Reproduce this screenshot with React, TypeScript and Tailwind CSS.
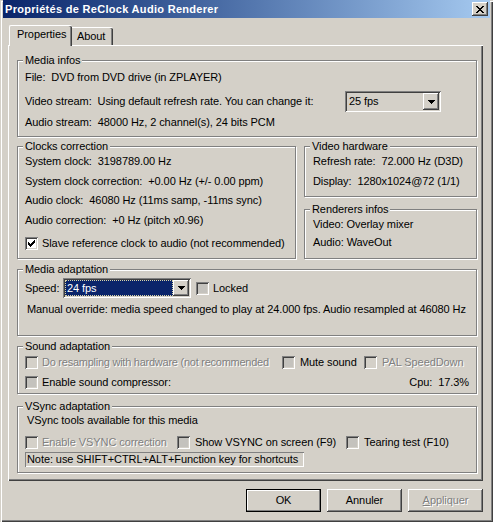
import type { ReactNode } from 'react';

const RAISED =
  'shadow-[inset_-1px_-1px_0_#404040,inset_1px_1px_0_#ffffff,inset_-2px_-2px_0_#808080,inset_2px_2px_0_#d4d0c8]';
const SUNKEN =
  'shadow-[inset_1px_1px_0_#808080,inset_-1px_-1px_0_#ffffff,inset_2px_2px_0_#404040,inset_-2px_-2px_0_#d4d0c8]';
const DISABLED = 'text-[#808080] [text-shadow:1px_1px_0_#ffffff]';

function Group({
  title,
  className,
  children,
}: {
  title: string;
  className: string;
  children: ReactNode;
}) {
  return (
    <div
      className={`relative border border-[#808080] shadow-[1px_1px_0_#ffffff,inset_1px_1px_0_#ffffff] ${className}`}
    >
      <span className="absolute -top-[7px] left-[5px] bg-[#d4d0c8] px-[2px] leading-[13px]">
        {title}
      </span>
      {children}
    </div>
  );
}

function Check({ checked, fill }: { checked?: boolean; fill: 'white' | 'gray' | 'off' }) {
  const bg = fill === 'white' ? 'bg-white' : fill === 'gray' ? 'bg-[#c4c2bd]' : 'bg-[#d4d0c8]';
  return (
    <span className={`relative block h-[13px] w-[13px] shrink-0 ${bg} ${SUNKEN}`}>
      {checked && (
        <svg className="absolute inset-0" width="13" height="13" viewBox="0 0 13 13" shapeRendering="crispEdges">
          <path
            d="M9 3h1v1h-1z M8 4h2v1h-2z M3 5h1v1h-1z M7 5h3v1h-3z M3 6h2v1h-2z M6 6h3v1h-3z M3 7h5v1h-5z M4 8h3v1h-3z M5 9h1v1h-1z"
            fill="#000"
          />
        </svg>
      )}
    </span>
  );
}

function CheckRow({
  label,
  checked,
  fill,
  disabled,
  gap,
  className = '',
  labelClass = '',
}: {
  label: string;
  checked?: boolean;
  fill: 'white' | 'gray' | 'off';
  disabled?: boolean;
  gap: string;
  className?: string;
  labelClass?: string;
}) {
  return (
    <div className={`flex h-[13px] shrink-0 items-center ${gap} ${className}`}>
      <Check checked={checked} fill={fill} />
      <span className={`whitespace-nowrap ${disabled ? DISABLED : ''} ${labelClass}`}>{label}</span>
    </div>
  );
}

function Arrow() {
  return (
    <svg width="7" height="4" viewBox="0 0 7 4" shapeRendering="crispEdges">
      <path d="M0 0h7v1h-1v1h-1v1h-1v1h-1v-1h-1v-1h-1v-1h-1z" fill="#000" />
    </svg>
  );
}

function Combo({ value, width, height, selected }: { value: string; width: string; height: string; selected?: boolean }) {
  return (
    <div className={`relative flex shrink-0 items-center bg-[#d4d0c8] p-[2px] ${width} ${height} ${SUNKEN}`}>
      {selected ? (
        <span className="flex h-full flex-1 items-center border border-dotted border-[#d8d4a8] bg-[#0a246a] pl-[1px] text-white">
          {value}
        </span>
      ) : (
        <span className="flex-1 pl-[2px]">{value}</span>
      )}
      <span className={`flex h-full w-[16px] shrink-0 items-center justify-center bg-[#d4d0c8] ${RAISED}`}>
        <Arrow />
      </span>
    </div>
  );
}

function Button({ children, kind }: { children: ReactNode; kind?: 'default' | 'disabled' }) {
  if (kind === 'default') {
    return (
      <div className="flex h-[23px] w-[75px] items-center justify-center border border-black shadow-[inset_-1px_-1px_0_#808080,inset_1px_1px_0_#ffffff]">
        {children}
      </div>
    );
  }
  return (
    <div className={`flex h-[23px] w-[75px] items-center justify-center ${RAISED} ${kind === 'disabled' ? DISABLED : ''}`}>
      {children}
    </div>
  );
}

export default function App() {
  return (
    <div className="relative h-[522px] w-[493px] overflow-hidden bg-[#d4d0c8] px-[3px] font-['Liberation_Sans',Arial,sans-serif] text-[11px] leading-[13px] tracking-[-0.08px] text-black shadow-[inset_1px_1px_0_#d4d0c8,inset_2px_2px_0_#ffffff,inset_-1px_-1px_0_#404040,inset_-2px_-2px_0_#808080]">
      {/* title bar */}
      <div className="flex h-[18px] items-center justify-between bg-gradient-to-r from-[#0a246a] to-[#a6caf0] pl-[2px] pr-[2px]">
        <span className="font-bold tracking-[0.3px] text-white">Propriétés de ReClock Audio Renderer</span>
        <span className={`flex h-[14px] w-[16px] items-center justify-center bg-[#d4d0c8] ${RAISED}`}>
          <svg width="8" height="7" viewBox="0 0 8 7" shapeRendering="crispEdges">
            <path
              d="M0 0h2v1h-2z M6 0h2v1h-2z M1 1h2v1h-2z M5 1h2v1h-2z M2 2h4v1h-4z M3 3h2v1h-2z M2 4h4v1h-4z M1 5h2v1h-2z M5 5h2v1h-2z M0 6h2v1h-2z M6 6h2v1h-2z"
              fill="#000"
            />
          </svg>
        </span>
      </div>

      <div className="ml-[5px] mt-[7px] w-[475px]">
        {/* tabs */}
        <div className="flex h-[20px] items-end pl-[1px]">
          <div className="relative z-10 -mb-px h-[21px] w-[63px] rounded-t-[2px] border-l border-t border-white bg-[#d4d0c8] pl-[7px] pt-[2px] shadow-[inset_-1px_0_0_#404040,inset_-2px_0_0_#808080]">
            Properties
          </div>
          <div className="h-[18px] w-[41px] rounded-tr-[2px] border-t border-white pl-[5px] pt-[2px] shadow-[inset_-1px_0_0_#404040,inset_-2px_0_0_#808080]">
            About
          </div>
        </div>

        {/* panel */}
        <div className="h-[436px] w-[475px] pl-[9px] pt-[15px] shadow-[inset_1px_1px_0_#ffffff,inset_-1px_-1px_0_#404040,inset_-2px_-2px_0_#808080]">
          <Group title="Media infos" className="h-[77px] w-[460px] pl-[7px] pt-[10px]">
            <div className="h-[13px]">File:&nbsp;&nbsp;DVD from DVD drive (in ZPLAYER)</div>
            <div className="mt-[7px] flex h-[21px] items-center pr-[35px]">
              <span className="flex-1 whitespace-nowrap">
                Video stream:&nbsp;&nbsp;Using default refresh rate. You can change it:
              </span>
              <Combo value="25 fps" width="w-[96px]" height="h-[21px]" />
            </div>
            <div className="mt-[4px] h-[13px]">Audio stream:&nbsp;&nbsp;48000 Hz, 2 channel(s), 24 bits PCM</div>
          </Group>

          <div className="mt-[9px] flex gap-[8px]">
            <Group title="Clocks correction" className="h-[113px] w-[279px] pl-[7px] pt-[8px]">
              <div className="h-[13px]">System clock:&nbsp;&nbsp;3198789.00 Hz</div>
              <div className="mt-[7px] h-[13px] whitespace-nowrap">
                System clock correction:&nbsp;&nbsp;+0.00 Hz (+/- 0.00 ppm)
              </div>
              <div className="mt-[6px] h-[13px] whitespace-nowrap">
                Audio clock:&nbsp;&nbsp;46080 Hz (11ms samp, -11ms sync)
              </div>
              <div className="mt-[7px] h-[13px]">Audio correction:&nbsp;&nbsp;+0 Hz (pitch x0.96)</div>
              <CheckRow
                className="mt-[10px]"
                gap="gap-[4px]"
                fill="white"
                checked
                label="Slave reference clock to audio (not recommended)"
              />
            </Group>

            <div className="flex w-[173px] flex-col">
              <Group title="Video hardware" className="h-[51px] pl-[8px] pt-[8px]">
                <div className="h-[13px] whitespace-nowrap">Refresh rate:&nbsp;&nbsp;72.000 Hz (D3D)</div>
                <div className="mt-[7px] h-[13px] whitespace-nowrap">Display:&nbsp;&nbsp;1280x1024@72 (1/1)</div>
              </Group>
              <Group title="Renderers infos" className="mt-[12px] h-[50px] pl-[8px] pt-[8px]">
                <div className="h-[13px]">Video:&nbsp;Overlay mixer</div>
                <div className="mt-[5px] h-[13px]">Audio:&nbsp;WaveOut</div>
              </Group>
            </div>
          </div>

          <Group title="Media adaptation" className="mt-[10px] h-[67px] w-[460px] pl-[7px] pt-[8px]">
            <div className="flex h-[20px] items-center">
              <span className="w-[38px] shrink-0">Speed:</span>
              <Combo value="24 fps" width="w-[128px]" height="h-[20px]" selected />
              <CheckRow className="ml-[5px]" gap="gap-[4px]" fill="gray" label="Locked" />
            </div>
            <div className="mt-[5px] h-[13px] whitespace-nowrap pl-[2px]">
              Manual override: media speed changed to play at 24.000 fps. Audio resampled at 46080 Hz
            </div>
          </Group>

          <Group title="Sound adaptation" className="mt-[10px] h-[48px] w-[460px] pl-[7px] pt-[9px]">
            <div className="flex h-[13px] items-center">
              <CheckRow
                className="w-[257px]"
                gap="gap-[4px]"
                fill="off"
                disabled
                labelClass="tracking-[-0.25px]"
                label="Do resampling with hardware (not recommended"
              />
              <CheckRow className="w-[82px]" gap="gap-[5px]" fill="gray" label="Mute sound" />
              <CheckRow gap="gap-[5px]" fill="off" disabled label="PAL SpeedDown" />
            </div>
            <div className="mt-[7px] flex h-[13px] items-center justify-between pr-[7px]">
              <CheckRow gap="gap-[4px]" fill="gray" label="Enable sound compressor:" />
              <span>Cpu:&nbsp;&nbsp;17.3%</span>
            </div>
          </Group>

          <Group title="VSync adaptation" className="mt-[12px] h-[67px] w-[460px] pl-[7px] pt-[7px]">
            <div className="h-[13px] pl-[2px]">VSync tools available for this media</div>
            <div className="mt-[9px] flex h-[13px] items-center">
              <CheckRow className="w-[152px]" gap="gap-[4px]" fill="off" disabled label="Enable VSYNC correction" />
              <CheckRow className="w-[169px]" gap="gap-[5px]" fill="gray" label="Show VSYNC on screen (F9)" />
              <CheckRow gap="gap-[5px]" fill="gray" label="Tearing test (F10)" />
            </div>
            <div className="mt-[3px] flex h-[15px] w-[279px] items-center whitespace-nowrap pl-[2px] shadow-[inset_1px_1px_0_#808080,inset_-1px_-1px_0_#ffffff]">
              Note: use SHIFT+CTRL+ALT+Function key for shortcuts
            </div>
          </Group>
        </div>
      </div>

      {/* buttons */}
      <div className="mt-[8px] flex justify-end gap-[6px] pr-[7px]">
        <Button kind="default">OK</Button>
        <Button>Annuler</Button>
        <Button kind="disabled">
          <span>
            <span className="underline">A</span>ppliquer
          </span>
        </Button>
      </div>
    </div>
  );
}
